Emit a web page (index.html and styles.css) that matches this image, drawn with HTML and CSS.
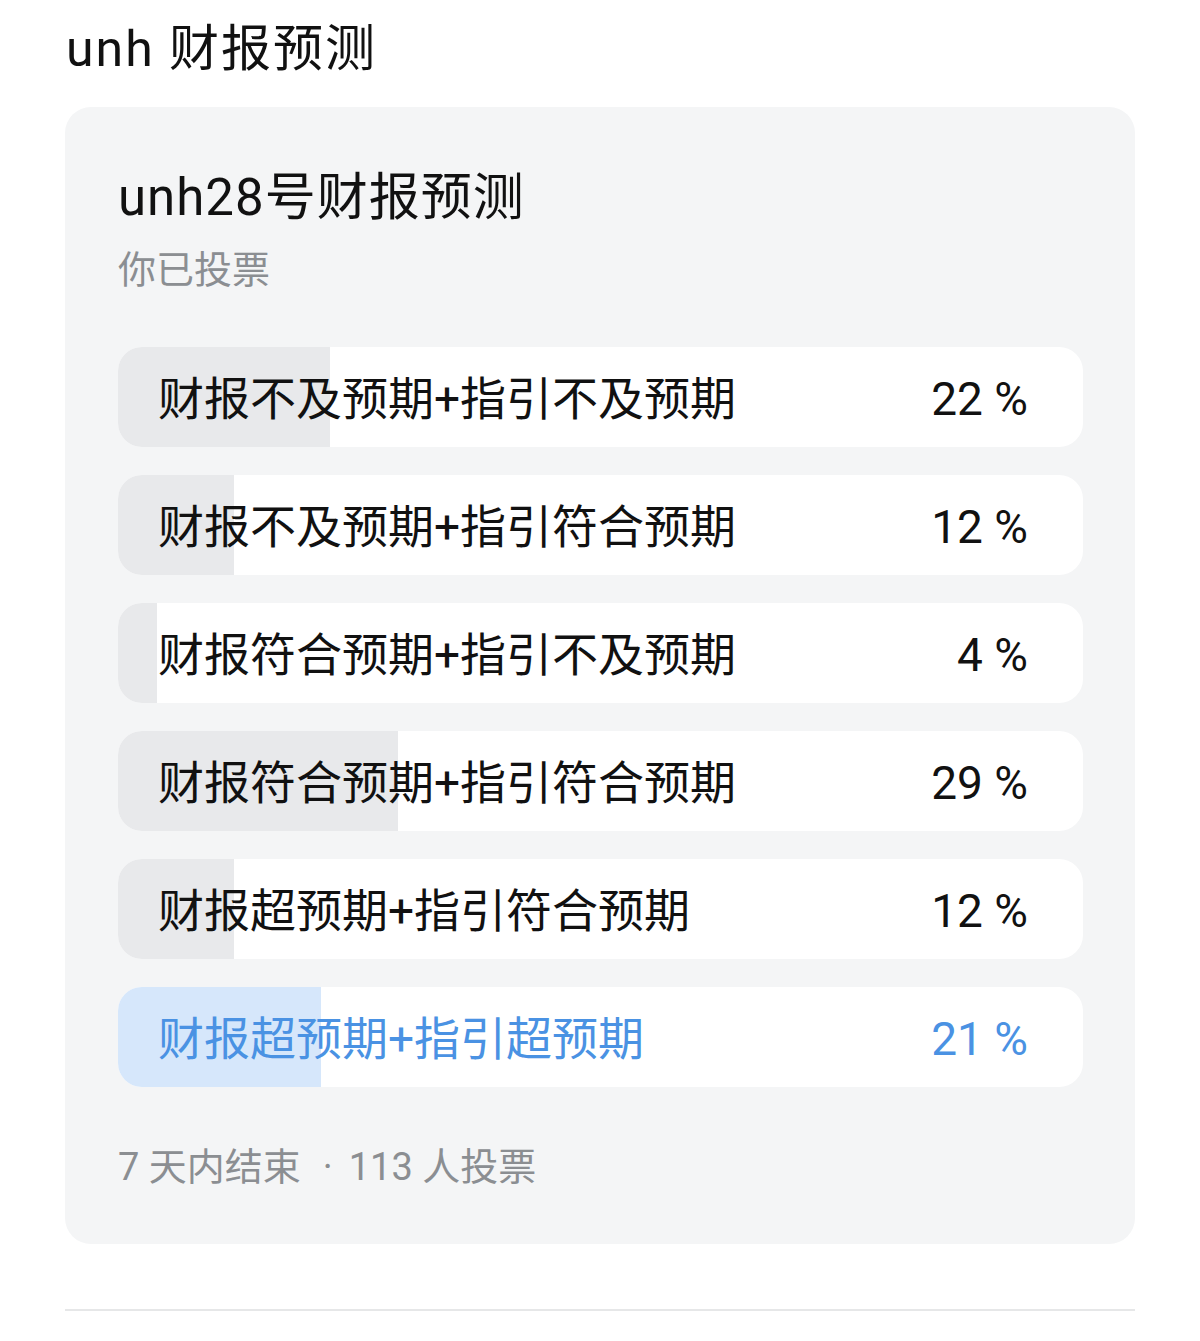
FILE: index.html
```html
<!DOCTYPE html>
<html lang="zh-CN">
<head>
<meta charset="utf-8">
<title>unh 财报预测</title>
<link rel="stylesheet" href="styles.css">
</head>
<body>
<div class="page">
  <h1 class="page-title">unh 财报预测</h1>
  <section class="poll">
    <h2 class="poll-title">unh28号财报预测</h2>
    <div class="poll-status">你已投票</div>
    <ul class="options">
      <li class="option"><span class="fill" style="width:22%"></span><span class="label">财报不及预期+指引不及预期</span><span class="pct">22 %</span></li>
      <li class="option"><span class="fill" style="width:12%"></span><span class="label">财报不及预期+指引符合预期</span><span class="pct">12 %</span></li>
      <li class="option"><span class="fill" style="width:4%"></span><span class="label">财报符合预期+指引不及预期</span><span class="pct">4 %</span></li>
      <li class="option"><span class="fill" style="width:29%"></span><span class="label">财报符合预期+指引符合预期</span><span class="pct">29 %</span></li>
      <li class="option"><span class="fill" style="width:12%"></span><span class="label">财报超预期+指引符合预期</span><span class="pct">12 %</span></li>
      <li class="option selected"><span class="fill" style="width:21%"></span><span class="label">财报超预期+指引超预期</span><span class="pct">21 %</span></li>
    </ul>
    <div class="poll-footer">7 天内结束<span class="sep">·</span>113 人投票</div>
  </section>
  <hr class="divider">
</div>
</body>
</html>
```

FILE: styles.css
```css
* { box-sizing: border-box; }
html, body {
  margin: 0;
  padding: 0;
  background: #ffffff;
}
body {
  font-family: Roboto, "Noto Sans CJK SC", "Noto Sans", sans-serif;
  color: #111111;
}
.page {
  padding: 16px 65px 0 65px;
}
.page-title {
  margin: 0;
  font-size: 50px;
  font-weight: 400;
  line-height: 66px;
  padding-left: 1px;
  letter-spacing: 2px;
}
.poll {
  margin-top: 25px;
  background: #f4f5f6;
  border-radius: 26px;
  padding: 56px 52px 52px 53px;
}
.poll-title {
  margin: 0;
  font-size: 51px;
  font-weight: 400;
  line-height: 70px;
  letter-spacing: 1px;
}
.poll-status {
  margin-top: 12px;
  font-size: 38px;
  font-weight: 400;
  line-height: 50px;
  color: #8b8e92;
}
.options {
  list-style: none;
  margin: 52px 0 0 0;
  padding: 0;
  display: flex;
  flex-direction: column;
  gap: 28px;
}
.option {
  position: relative;
  height: 100px;
  background: #ffffff;
  border-radius: 24px;
  overflow: hidden;
  display: flex;
  align-items: center;
  justify-content: space-between;
  padding: 3px 55px 0 40px;
}
.fill {
  position: absolute;
  left: 0;
  top: 0;
  bottom: 0;
  background: #e8e9eb;
}
.label, .pct {
  position: relative;
  font-size: 46px;
  font-weight: 400;
  line-height: 1;
}
.pct {
  font-size: 46px;
}
.selected .fill { background: #d6e7fb; }
.selected .label, .selected .pct { color: #4a92e3; }
.poll-footer {
  margin-top: 55px;
  font-size: 38px;
  font-weight: 400;
  line-height: 50px;
  color: #8b8e92;
}
.sep {
  display: inline-block;
  margin: 0 16px 0 22px;
}
.divider {
  margin: 65px 0 0 0;
  border: 0;
  height: 2px;
  background: #e6e7e8;
}
```
